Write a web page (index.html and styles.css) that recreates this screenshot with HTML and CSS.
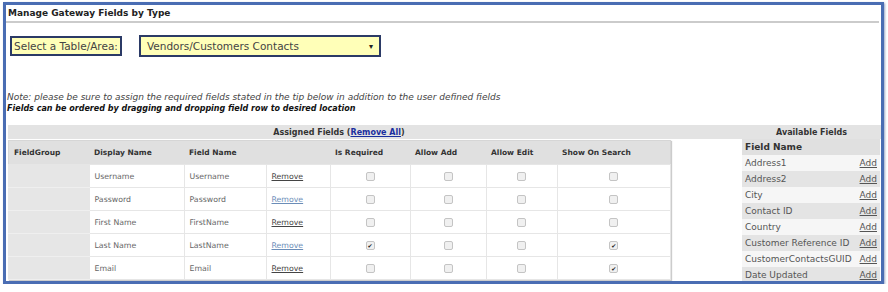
FILE: index.html
```html
<!DOCTYPE html>
<html lang="en">
<head>
  <meta charset="UTF-8" />
  <title>Manage Gateway Fields by Type</title>
  <link rel="stylesheet" href="styles.css">
</head>
<body>
  <div class="frame">
    <div class="title">Manage Gateway Fields by Type</div>

    <div class="picker">
      <span class="picker-label">Select a Table/Area:</span>
      <div class="picker-select">
        <span>Vendors/Customers Contacts</span>
        <span class="arrow">&#9662;</span>
      </div>
    </div>

    <p class="note">Note: please be sure to assign the required fields stated in the tip below in addition to the user defined fields</p>
    <p class="hint">Fields can be ordered by dragging and dropping field row to desired location</p>

    <div class="fields">
      <div class="band">
        <div class="band-assigned">Assigned Fields (<a href="#">Remove All</a>)</div>
        <div class="band-available">Available Fields</div>
      </div>

      <div class="lists">
        <table class="assigned">
          <thead>
            <tr>
              <th class="c-group">FieldGroup</th>
              <th class="c-display">Display Name</th>
              <th class="c-field">Field Name</th>
              <th class="c-remove"></th>
              <th class="c-req">Is Required</th>
              <th class="c-add">Allow Add</th>
              <th class="c-edit">Allow Edit</th>
              <th class="c-search">Show On Search</th>
            </tr>
          </thead>
          <tbody>
            <tr>
              <td class="group"></td><td>Username</td><td>Username</td>
              <td><a href="#" class="remove">Remove</a></td>
              <td class="chk"><span class="box"></span></td>
              <td class="chk"><span class="box"></span></td>
              <td class="chk"><span class="box"></span></td>
              <td class="chk"><span class="box"></span></td>
            </tr>
            <tr>
              <td class="group"></td><td>Password</td><td>Password</td>
              <td><a href="#" class="remove visited">Remove</a></td>
              <td class="chk"><span class="box"></span></td>
              <td class="chk"><span class="box"></span></td>
              <td class="chk"><span class="box"></span></td>
              <td class="chk"><span class="box"></span></td>
            </tr>
            <tr>
              <td class="group"></td><td>First Name</td><td>FirstName</td>
              <td><a href="#" class="remove">Remove</a></td>
              <td class="chk"><span class="box"></span></td>
              <td class="chk"><span class="box"></span></td>
              <td class="chk"><span class="box"></span></td>
              <td class="chk"><span class="box"></span></td>
            </tr>
            <tr>
              <td class="group"></td><td>Last Name</td><td>LastName</td>
              <td><a href="#" class="remove visited">Remove</a></td>
              <td class="chk"><span class="box checked">&#10004;</span></td>
              <td class="chk"><span class="box"></span></td>
              <td class="chk"><span class="box"></span></td>
              <td class="chk"><span class="box checked">&#10004;</span></td>
            </tr>
            <tr>
              <td class="group"></td><td>Email</td><td>Email</td>
              <td><a href="#" class="remove">Remove</a></td>
              <td class="chk"><span class="box"></span></td>
              <td class="chk"><span class="box"></span></td>
              <td class="chk"><span class="box"></span></td>
              <td class="chk"><span class="box checked">&#10004;</span></td>
            </tr>
          </tbody>
        </table>

        <table class="available">
          <thead>
            <tr><th colspan="2">Field Name</th></tr>
          </thead>
          <tbody>
            <tr><td>Address1</td><td class="add"><a href="#">Add</a></td></tr>
            <tr><td>Address2</td><td class="add"><a href="#">Add</a></td></tr>
            <tr><td>City</td><td class="add"><a href="#">Add</a></td></tr>
            <tr><td>Contact ID</td><td class="add"><a href="#">Add</a></td></tr>
            <tr><td>Country</td><td class="add"><a href="#">Add</a></td></tr>
            <tr><td>Customer Reference ID</td><td class="add"><a href="#">Add</a></td></tr>
            <tr><td>CustomerContactsGUID</td><td class="add"><a href="#">Add</a></td></tr>
            <tr><td>Date Updated</td><td class="add"><a href="#">Add</a></td></tr>
          </tbody>
        </table>
      </div>
    </div>
  </div>
</body>
</html>
```

FILE: styles.css
```css
body {
  margin: 0;
  background-color: #fff;
  font-family: "DejaVu Sans", sans-serif;
  color: #333;
}
.frame {
  margin: 2px 4px 0 3px;
  height: 276px;
  border: 3px solid #4a6db3;
  overflow: hidden;
  box-shadow: 1px 1px 2px #9aa8c8;
}
.title {
  font-size: 9px;
  font-weight: bold;
  color: #222;
  padding: 3px 2px 3px 2px;
  border-bottom: 2px solid #cbcbcb;
  margin-right: 2px;
}
.picker {
  display: flex;
  align-items: center;
  gap: 17px;
  margin: 12px 0 0 4px;
}
.picker-label {
  background-color: #ffffb8;
  border: 2px solid #2b3a66;
  padding: 2px 2px;
  font-size: 10.5px;
  color: #444;
}
.picker-select {
  display: flex;
  justify-content: space-between;
  align-items: center;
  width: 226px;
  height: 18px;
  background-color: #ffffb8;
  border: 2px solid #2b3a66;
  padding: 0 6px;
  font-size: 10.5px;
  color: #444;
}
.arrow {
  font-size: 8px;
  color: #222;
}
.note {
  margin: 35px 0 0 1px;
  font-size: 9px;
  font-style: italic;
  color: #444;
}
.hint {
  margin: 2px 0 0 1px;
  font-size: 8px;
  font-style: italic;
  font-weight: bold;
  color: #111;
}
.fields {
  margin: 12px 0 0 2px;
}
.band {
  display: flex;
  height: 14px;
  align-items: center;
  background-color: #e3e3e3;
  font-size: 8px;
  font-weight: bold;
  color: #333;
}
.band-assigned {
  width: 662px;
  text-align: center;
}
.band-assigned a {
  color: #1a2f9e;
}
.band-available {
  margin-left: 72px;
  flex: 1;
  text-align: center;
}
.lists {
  display: flex;
  justify-content: space-between;
  align-items: flex-start;
}
table {
  border-collapse: collapse;
  font-size: 8px;
}
.assigned {
  width: 663px;
  margin-top: 1px;
  border: 1px solid #d6d6d6;
  box-shadow: 1px 1px 1px #ccc;
  font-size: 7.8px;
}
.assigned th {
  background-color: #e0e0e0;
  height: 23px;
  padding: 0 5px;
  text-align: left;
  font-weight: bold;
  color: #333;
  font-size: 7.5px;
}
.assigned td {
  height: 22px;
  padding: 0 5px;
  border: 1px solid #e6e6e6;
  color: #666;
}
.assigned td.group {
  background-color: #e6e6e6;
  border-color: #e6e6e6;
  border-bottom-color: #efefef;
}
.c-group { width: 70px; }
.c-display { width: 85px; }
.c-field { width: 72px; }
.c-remove { width: 54px; }
.c-req { width: 70px; }
.c-add { width: 66px; }
.c-edit { width: 61px; }
.remove {
  color: #444;
}
.remove.visited {
  color: #6b8db8;
}
.chk {
  text-align: center;
}
.box {
  display: inline-block;
  width: 7px;
  height: 7px;
  border: 1px solid #c4c4c4;
  border-radius: 2px;
  background-color: #f0f0f0;
  font-size: 6px;
  line-height: 7px;
  color: #222;
  vertical-align: middle;
}
.available {
  width: 138px;
  font-size: 9px;
  margin-right: 1px;
}
.available th {
  background-color: #e0e0e0;
  height: 16px;
  padding: 0 3px;
  text-align: left;
  font-weight: bold;
  color: #333;
}
.available td {
  height: 16px;
  padding: 0 3px;
  color: #555;
  background-color: #f6f6f6;
  white-space: nowrap;
}
.available tbody tr:nth-child(even) td {
  background-color: #e4e4e4;
}
.available td.add {
  text-align: right;
  padding: 0 3px 0 0;
}
.add a {
  color: #555;
}
```
